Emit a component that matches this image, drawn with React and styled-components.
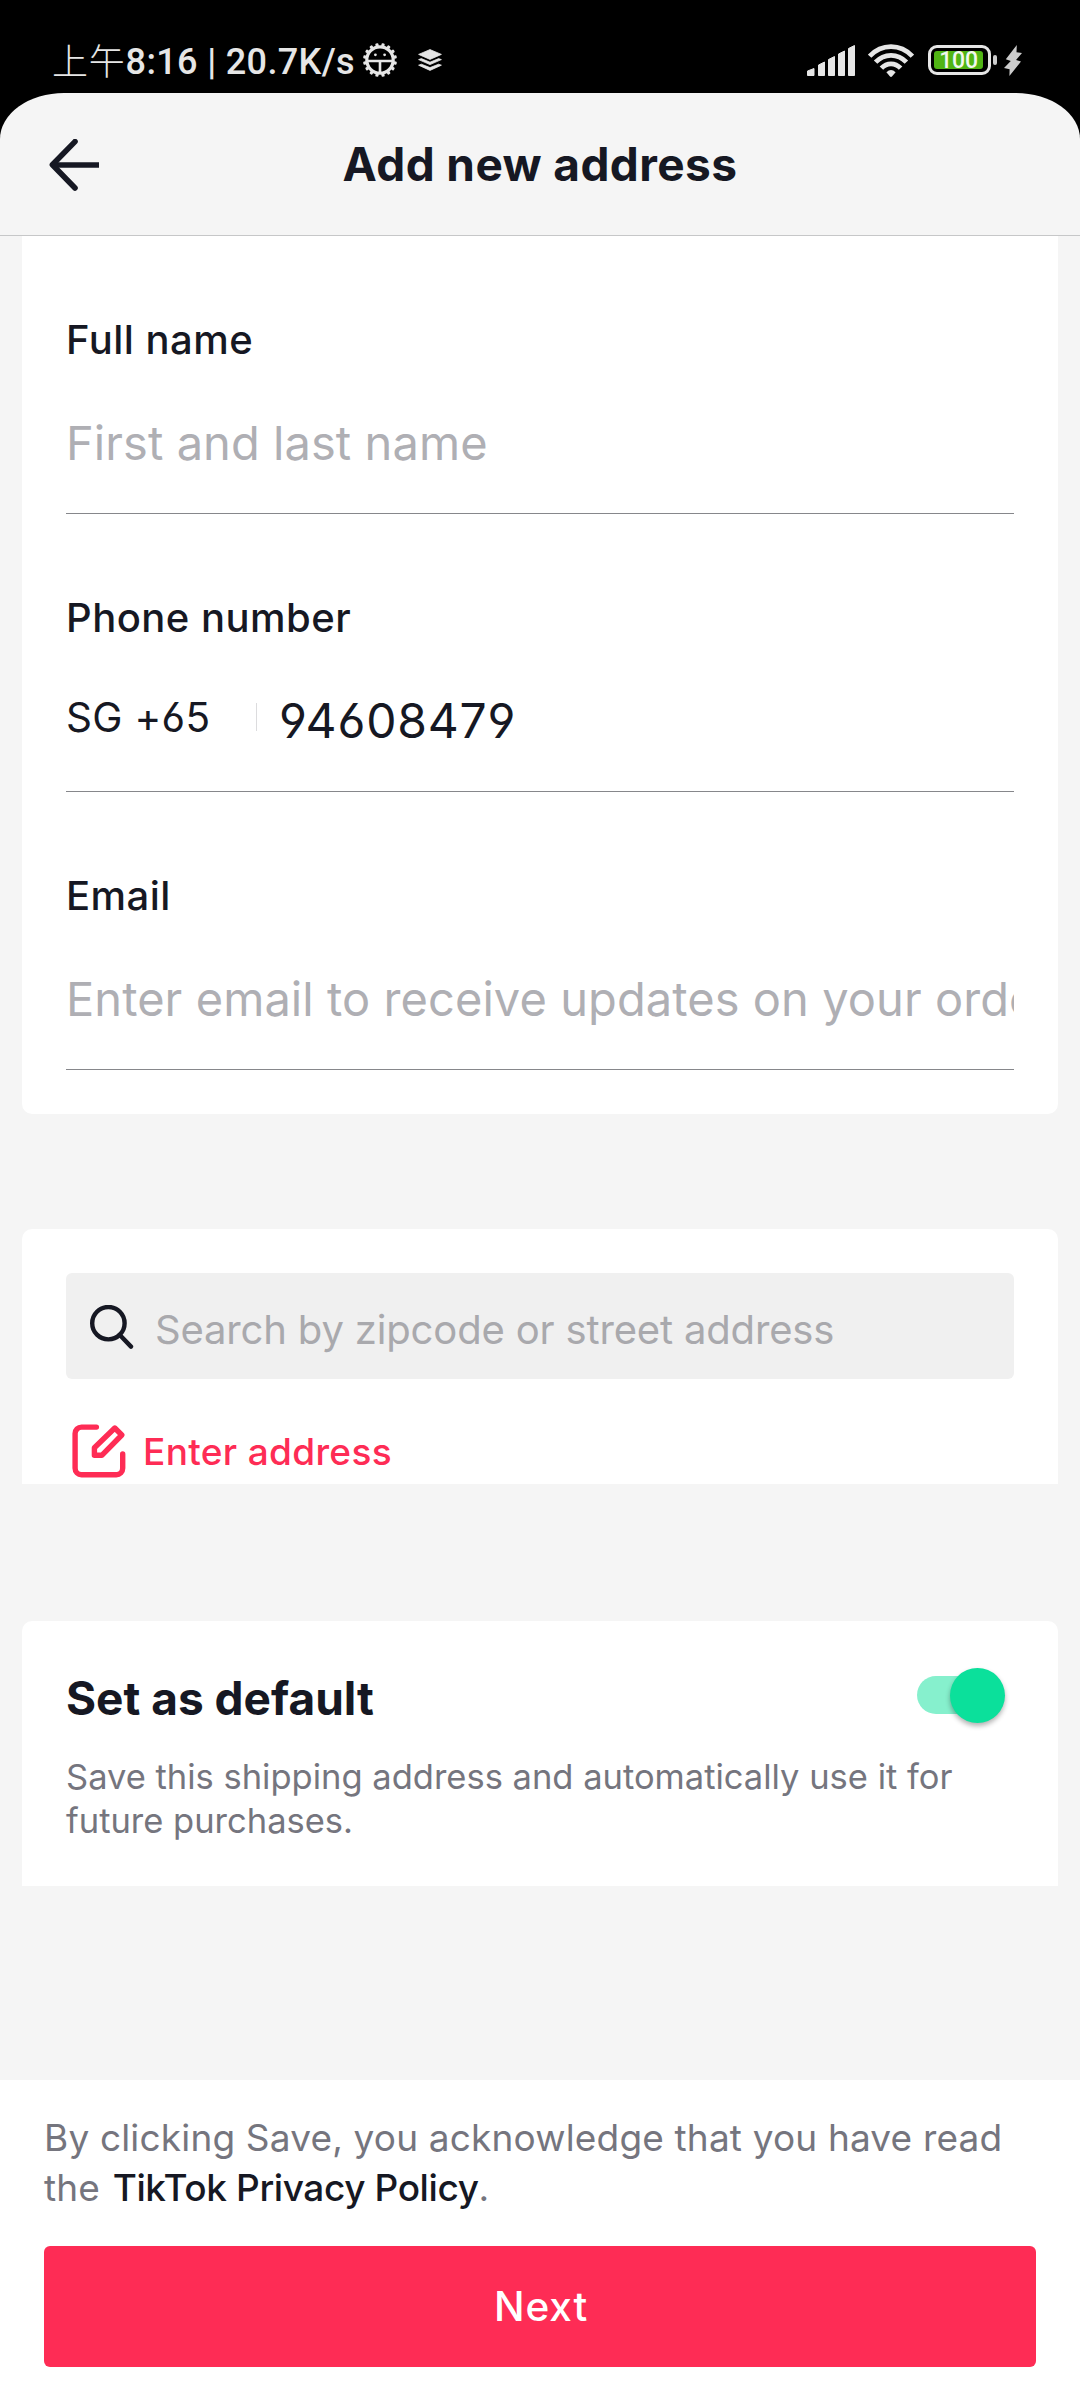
import React from 'react';
import styled, { createGlobalStyle } from 'styled-components';

const GlobalStyle = createGlobalStyle`
  * { box-sizing: border-box; }
  body {
    margin: 0;
    background: #000;
    color: #161823;
    font-family: Inter, "Noto Sans CJK SC", sans-serif;
  }
`;

const Phone = styled.div`
  width: 1080px;
  height: 2400px;
  display: flex;
  flex-direction: column;
  overflow: hidden;
  background: #000;
`;

const StatusBar = styled.div`
  height: 93px;
  flex: none;
  display: flex;
  align-items: flex-start;
  justify-content: space-between;
  padding: 40px 58px 0 52px;
  color: #e6e6e6;
`;

const StatusGroup = styled.div`
  display: flex;
  align-items: flex-start;
`;

const Clock = styled.span`
  font: 500 36px/42px Roboto, "Noto Sans CJK SC", sans-serif;
  letter-spacing: 0.35px;
  white-space: pre;
  padding-top: 1px;
`;

const Meridiem = styled.span`
  font: 300 36px/42px "Noto Sans CJK SC", sans-serif;
  letter-spacing: 0.8px;
  display: block;
  margin-top: -2px;
`;

const StatusIcon = styled.svg`
  display: block;
  flex: none;
  margin-left: ${p => p.$gap || 0}px;
  margin-top: ${p => p.$top || 0}px;
`;

const Battery = styled.div`
  width: 63px;
  height: 30px;
  margin: 5px 0 0 14px;
  padding: 3px;
  border: 3px solid #e6e6e6;
  border-radius: 9px;
`;

const BatteryLevel = styled.div`
  height: 18px;
  width: 49px;
  border-radius: 3px;
  background: #50b414;
  color: #f2f8ee;
  font: 500 23px/19px Roboto, sans-serif;
  letter-spacing: -0.2px;
  text-align: center;
`;

const BatteryTip = styled.div`
  width: 4px;
  height: 10px;
  margin: 15px 0 0 2px;
  border-radius: 2px;
  background: #ccc;
`;

const Screen = styled.div`
  flex: 1;
  display: flex;
  flex-direction: column;
  background: #f5f5f5;
  border-radius: 64px 64px 0 0 / 46px 46px 0 0;
  overflow: hidden;
`;

const Header = styled.header`
  height: 143px;
  flex: none;
  display: grid;
  grid-template-columns: 100px 1fr 100px;
  align-items: center;
  border-bottom: 1px solid #c6c7c8;
`;

const BackButton = styled.button`
  border: 0;
  padding: 0 0 0 48px;
  background: none;
  color: inherit;
  display: flex;
  svg { display: block; margin-top: 1px; }
`;

const Title = styled.h1`
  margin: 0;
  font-size: 46px;
  line-height: 56px;
  font-weight: 700;
  letter-spacing: 0.4px;
  text-align: center;
`;

const Card = styled.section`
  flex: none;
  margin: ${p => p.$gap || 0}px 22px 0;
  padding: ${p => p.$pad};
  background: #fff;
  border-radius: ${p => p.$radius};
`;

const Field = styled.div`
  height: 278px;
  padding-top: 79px;
  border-bottom: 1px solid #86878b;
`;

const Label = styled.div`
  font-size: 40px;
  line-height: 49px;
  font-weight: 500;
  letter-spacing: 0.48px;
`;

const Placeholder = styled.div`
  margin-top: 50px;
  font-size: 47px;
  line-height: 57px;
  letter-spacing: 0.07px;
  color: #afafb4;
  white-space: nowrap;
  overflow: hidden;
`;

const PhoneRow = styled.div`
  display: flex;
  align-items: flex-start;
  padding-top: 49px;
`;

const CountryCode = styled.div`
  width: 190px;
  padding-top: 2px;
  font-size: 40.5px;
  line-height: 49px;
  letter-spacing: 0.3px;
  font-feature-settings: "cv03", "cv04";
`;

const Divider = styled.div`
  width: 1px;
  height: 28px;
  margin-top: 12px;
  background: #dcdcde;
`;

const PhoneNumber = styled.div`
  padding-left: 22px;
  font-size: 48px;
  line-height: 59px;
  letter-spacing: 0.8px;
  font-feature-settings: "cv03", "cv04";
`;

const SearchBox = styled.div`
  height: 106px;
  display: flex;
  align-items: flex-start;
  padding: 32px 24px 0;
  border-radius: 6px;
  background: #f0f0f0;
`;

const SearchText = styled.span`
  margin-left: 21px;
  font-size: 40px;
  line-height: 49px;
  letter-spacing: -0.16px;
  color: #a9a9ad;
`;

const EnterAddress = styled.div`
  display: flex;
  align-items: flex-start;
  padding: 45px 0 0 6px;
  color: #fe2c55;
`;

const EnterText = styled.span`
  margin: 5px 0 0 17px;
  font-size: 37px;
  line-height: 45px;
  font-weight: 500;
  letter-spacing: 0.33px;
`;

const DefaultRow = styled.div`
  display: flex;
  justify-content: space-between;
  align-items: flex-start;
`;

const DefaultTitle = styled.h2`
  margin: 0;
  font-size: 46px;
  line-height: 56px;
  font-weight: 700;
`;

const Track = styled.div`
  position: relative;
  width: 80px;
  height: 38px;
  margin: 6px 25px 0 0;
  border-radius: 19px;
  background: #86f0cd;
`;

const Thumb = styled.div`
  position: absolute;
  left: 33px;
  top: -8px;
  width: 55px;
  height: 55px;
  border-radius: 50%;
  background: #0be09b;
  box-shadow: 0 3px 5px rgba(0, 0, 0, 0.3);
`;

const Description = styled.p`
  margin: 29px 0 0;
  font-size: 34.5px;
  line-height: 44px;
  color: #75757e;
`;

const Footer = styled.footer`
  height: 320px;
  margin-top: auto;
  padding: 33px 44px;
  background: #fff;
`;

const Terms = styled.p`
  margin: 0 0 33px;
  font-size: 37px;
  line-height: 50px;
  letter-spacing: 0.17px;
  color: #75757e;
`;

const PolicyLink = styled.span`
  margin-left: 2px;
  font-weight: 500;
  letter-spacing: -0.4px;
  color: #161823;
`;

const NextButton = styled.button`
  display: block;
  width: 100%;
  height: 121px;
  border: 0;
  border-radius: 6px;
  background: #fe2c55;
  color: #fff;
  font: 500 40.5px/49px Inter, sans-serif;
  letter-spacing: 0.9px;
  padding: 0 0 0 2px;
`;

const TEETH = Array.from({ length: 16 }, (_, i) => i * 22.5 + 11.25);

function GearIcon() {
  return (
    <StatusIcon width="34" height="34" viewBox="0 0 34 34" $gap={8} $top={3}>
      <circle cx="17" cy="17" r="13.2" fill="none" stroke="#e6e6e6" strokeWidth="3.2" />
      {TEETH.map(a => (
        <rect key={a} x="15.4" y="0" width="3.2" height="4" rx="1" fill="#e6e6e6" transform={`rotate(${a} 17 17)`} />
      ))}
      <path d="M4 18h26M17 18v13" stroke="#e6e6e6" strokeWidth="2.6" />
      <circle cx="12.4" cy="11.8" r="1.4" fill="#e6e6e6" />
      <circle cx="21.6" cy="11.8" r="1.4" fill="#e6e6e6" />
    </StatusIcon>
  );
}

function LayersIcon() {
  return (
    <StatusIcon width="24" height="22" viewBox="0 0 24 22" $gap={21} $top={9}>
      <g fill="#e6e6e6" stroke="#e6e6e6" strokeWidth="0.8" strokeLinejoin="round">
        <path d="M12 .6 23.4 5.4 12 10.4.6 5.4Z" />
        <path d="M.6 10.6 3.4 9.6 12 13.2 20.6 9.6 23.4 10.6 12 15.6Z" />
        <path d="M.6 16.2 3.4 15.2 12 18.6 20.6 15.2 23.4 16.2 12 21.4Z" />
      </g>
    </StatusIcon>
  );
}

function SignalIcon() {
  return (
    <StatusIcon width="48" height="31" viewBox="0 0 48 31" $top={5}>
      <g fill="#e6e6e6" stroke="#e6e6e6" strokeLinejoin="round">
        <path d="M.5 26 7 23.5v7H.5Z" />
        <path d="M11.5 20 17.5 17v13.5h-6Z" />
        <path d="M21.5 14.5 27.5 11.5v19h-6Z" />
        <path d="M31.5 9 37.5 6v24.5h-6Z" />
        <path d="M41.5 3.5 47.5.5v30h-6Z" />
      </g>
    </StatusIcon>
  );
}

function WifiIcon() {
  return (
    <StatusIcon width="46" height="34" viewBox="0 0 46 34" $gap={13} $top={3}>
      <g fill="none" stroke="#e6e6e6" strokeWidth="4.8">
        <path d="M1.6 13.2C13.6.4 32.4.4 44.4 13.2" />
        <path d="M7.6 19.2C16.2 10 29.8 10 38.4 19.2" />
        <path d="M13.4 25.2C18.8 19.4 27.2 19.4 32.6 25.2" />
      </g>
      <path d="M18.4 29.2Q23 25 27.6 29.2L24.2 33.2Q23 34.6 21.8 33.2Z" fill="#e6e6e6" />
    </StatusIcon>
  );
}

function BoltIcon() {
  return (
    <StatusIcon width="18" height="31" viewBox="0 0 18 31" $gap={7} $top={5}>
      <path d="M12.8 0 1.8 14.3 6.8 16 0 23 5.6 24.3 5.4 31 17 16.5 12 15 18 8 12.5 7.2Z" fill="#ccc" />
    </StatusIcon>
  );
}

function BackIcon() {
  return (
    <svg width="52" height="52" viewBox="0 0 52 52" fill="none" stroke="#161823" strokeWidth="5.6" strokeLinejoin="round">
      <path d="M27 2.6 4.4 25.8 27 49" strokeLinecap="round" />
      <path d="M4.4 26H51" />
    </svg>
  );
}

function SearchIcon() {
  return (
    <svg width="44" height="44" viewBox="0 0 44 44" fill="none" stroke="#161823" strokeWidth="4.4">
      <circle cx="18.4" cy="18.2" r="16.2" />
      <path d="M29.6 29.8 41 41.6" strokeLinecap="round" />
    </svg>
  );
}

function EditIcon() {
  return (
    <svg width="54" height="54" viewBox="0 0 54 54" fill="none" stroke="#fe2c55" strokeWidth="5.4" strokeLinejoin="round">
      <path d="M24.4 3.1H9.5a6.4 6.4 0 0 0-6.4 6.4v34.8a6.4 6.4 0 0 0 6.4 6.4h34.8a6.4 6.4 0 0 0 6.4-6.4V30" strokeLinecap="round" />
      <path d="M42.8 4 49.8 11 29.8 31.3H22.4V23.7Z" />
    </svg>
  );
}

export default function App() {
  return (
    <Phone>
      <GlobalStyle />
      <StatusBar>
        <StatusGroup>
          <Meridiem>上午</Meridiem>
          <Clock>8:16 | 20.7K/s</Clock>
          <GearIcon />
          <LayersIcon />
        </StatusGroup>
        <StatusGroup>
          <SignalIcon />
          <WifiIcon />
          <Battery><BatteryLevel>100</BatteryLevel></Battery>
          <BatteryTip />
          <BoltIcon />
        </StatusGroup>
      </StatusBar>
      <Screen>
        <Header>
          <BackButton aria-label="Back"><BackIcon /></BackButton>
          <Title>Add new address</Title>
        </Header>
        <Card $pad="0 44px 44px" $radius="0 0 10px 10px">
          <Field>
            <Label>Full name</Label>
            <Placeholder>First and last name</Placeholder>
          </Field>
          <Field>
            <Label>Phone number</Label>
            <PhoneRow>
              <CountryCode>SG +65</CountryCode>
              <Divider />
              <PhoneNumber>94608479</PhoneNumber>
            </PhoneRow>
          </Field>
          <Field>
            <Label>Email</Label>
            <Placeholder>Enter email to receive updates on your order</Placeholder>
          </Field>
        </Card>
        <Card $gap={115} $pad="44px 44px 6px" $radius="10px 10px 0 0">
          <SearchBox>
            <SearchIcon />
            <SearchText>Search by zipcode or street address</SearchText>
          </SearchBox>
          <EnterAddress>
            <EditIcon />
            <EnterText>Enter address</EnterText>
          </EnterAddress>
        </Card>
        <Card $gap={137} $pad="49px 36px 43px 44px" $radius="10px 10px 0 0">
          <DefaultRow>
            <DefaultTitle>Set as default</DefaultTitle>
            <Track><Thumb /></Track>
          </DefaultRow>
          <Description>
            Save this shipping address and automatically use it for future purchases.
          </Description>
        </Card>
        <Footer>
          <Terms>
            By clicking Save, you acknowledge that you have read the <PolicyLink>TikTok Privacy Policy</PolicyLink>.
          </Terms>
          <NextButton>Next</NextButton>
        </Footer>
      </Screen>
    </Phone>
  );
}
